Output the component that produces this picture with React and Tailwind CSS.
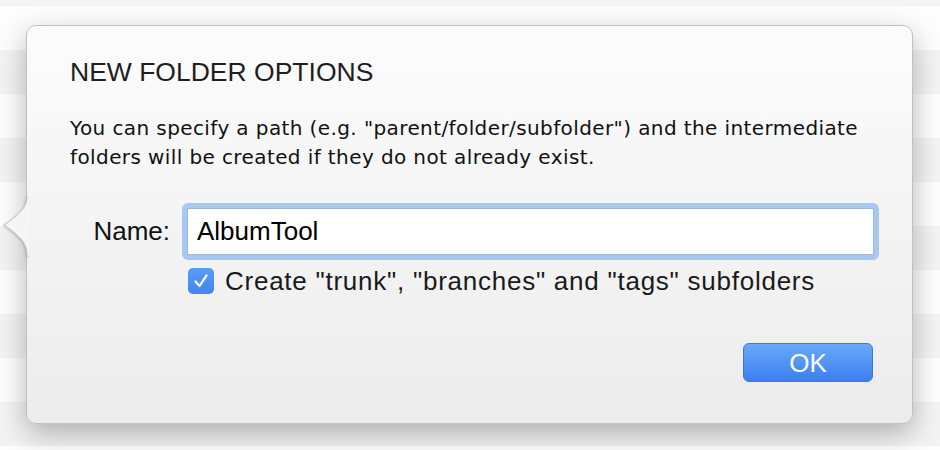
// New folder options popover, over a striped list

const stripes = [...Array(10)].map((_, i) => (i % 2 === 0 ? 'bg-[#fdfdfd]' : 'bg-[#f3f3f3]'));

function Pointer() {
    return (
        <svg
            className="absolute left-[-25px] top-[170px] drop-shadow-[-1px_1px_1px_rgba(0,0,0,0.15)]"
            width="28"
            height="60"
            viewBox="0 0 28 60"
        >
            <path d="M25 0 C25 11 19 17 2 29 C19 41 25 47 25 60 L28 60 L28 0 Z" fill="#f5f5f5" />
            <path d="M25 0 C25 11 19 17 2 29 C19 41 25 47 25 60" fill="none" stroke="#bdbdbd" strokeWidth="1" />
        </svg>
    );
}

function Checkbox() {
    return (
        <div className="w-[26px] h-[26px] rounded-[5px] bg-linear-to-b from-[#5a9cf4] to-[#3e86ef] flex items-center justify-center shrink-0">
            <svg width="16" height="16" viewBox="0 0 16 16">
                <path d="M2.5 8.5 L6.5 13 L13.5 2.5" fill="none" stroke="#fff" strokeWidth="2.2" strokeLinecap="round" strokeLinejoin="round" />
            </svg>
        </div>
    );
}

export default function App() {
    return (
        <div className="relative w-[940px] h-[450px] overflow-hidden bg-[#fdfdfd]">
            {/* Background list rows */}
            <div className="flex flex-col">
                <div className="h-[6px] bg-[#f3f3f3]" />
                {stripes.map((c, i) => (
                    <div key={i} className={`h-[44px] ${c}`} />
                ))}
            </div>

            {/* Popover */}
            <div className="absolute left-[26px] top-[25px] w-[887px] h-[399px] rounded-[10px] border border-[#c0c0c0] bg-linear-to-b from-[#fcfcfc] to-[#ececec] shadow-[0_10px_28px_rgba(0,0,0,0.28)]">
                <Pointer />
                <div className="flex flex-col pl-[43px] pr-[33px] pt-[33px]" style={{ fontFamily: '"Liberation Sans", Arial, sans-serif' }}>
                    <h1 className="text-[26.5px] leading-[26px] text-[#1e1e1e] font-normal">NEW FOLDER OPTIONS</h1>

                    <p
                        className="mt-[29px] text-[20px] leading-[29px] tracking-[0.4px] text-[#111]"
                        style={{ fontFamily: '"DejaVu Sans", Verdana, sans-serif' }}
                    >
                        You can specify a path (e.g. "parent/folder/subfolder") and the intermediate
                        <br />
                        folders will be created if they do not already exist.
                    </p>

                    {/* Name field */}
                    <div className="mt-[31px] flex items-center">
                        <label className="w-[100px] text-right text-[26px] text-[#111]">Name:</label>
                        <div className="ml-[12px] w-[697px] h-[57px] p-[5px] rounded-[6px] bg-[#a7c8f2]">
                            <div className="h-full bg-white border border-[#9fb8dc] flex items-center pl-[9px] text-[26px] text-black">
                                AlbumTool
                            </div>
                        </div>
                    </div>

                    {/* Subfolders option */}
                    <div className="mt-[8px] ml-[118px] flex items-center gap-[11px]">
                        <Checkbox />
                        <span className="text-[26px] leading-[26px] tracking-[0.75px] text-[#1a1a1a]">
                            Create "trunk", "branches" and "tags" subfolders
                        </span>
                    </div>

                    <div className="mt-[49px] flex justify-end pr-[6px]">
                        <button className="w-[130px] h-[39px] rounded-[6px] bg-linear-to-b from-[#6aa8f9] to-[#3b7ff1] border border-[#3a78e0] text-white text-[26px] leading-none flex items-center justify-center">
                            OK
                        </button>
                    </div>
                </div>
            </div>
        </div>
    );
}
